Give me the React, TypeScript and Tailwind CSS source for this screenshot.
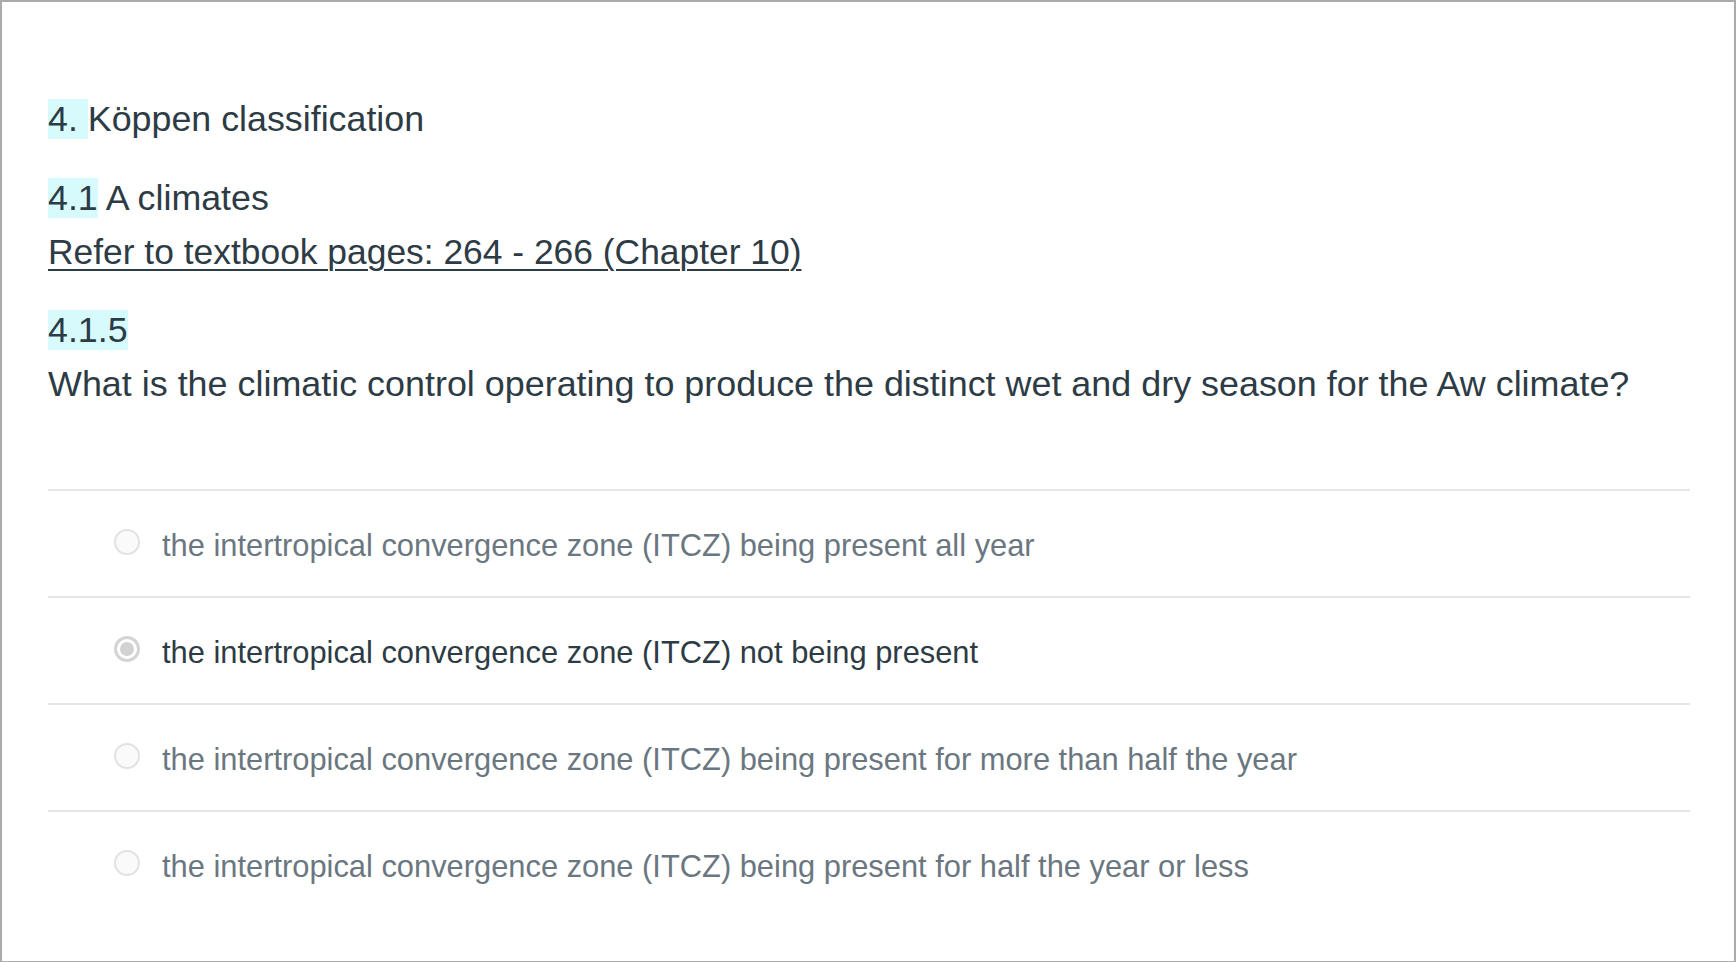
import React from "react";

const options = [
  { text: "the intertropical convergence zone (ITCZ) being present all year", selected: false },
  { text: "the intertropical convergence zone (ITCZ) not being present", selected: true },
  { text: "the intertropical convergence zone (ITCZ) being present for more than half the year", selected: false },
  { text: "the intertropical convergence zone (ITCZ) being present for half the year or less", selected: false },
];

export default function App() {
  return (
    <div className="box-border w-[1736px] h-[962px] overflow-hidden bg-white border-t-2 border-x-2 border-b border-[#ababab] font-['Liberation_Sans',Arial,sans-serif] text-[#2d3b45]">
      <div className="pl-[46px] pr-[44px] pt-[97px]">
        <div className="text-[35.8px] leading-[40px]">
          <span className="bg-[#d7fbfd]">4. </span>Köppen classification
        </div>
        <div className="mt-[39px] text-[35.8px] leading-[40px]">
          <span className="bg-[#d7fbfd]">4.1</span> A climates
        </div>
        <div className="mt-[14px] text-[35.4px] leading-[40px]">
          <a className="underline decoration-2 underline-offset-[5px] text-[#2d3b45]">
            Refer to textbook pages: 264 - 266 (Chapter 10)
          </a>
        </div>
        <div className="mt-[38px] text-[35.8px] leading-[40px]">
          <span className="bg-[#d7fbfd]">4.1.5</span>
        </div>
        <div className="mt-[14px] text-[35.9px] leading-[40px]">
          What is the climatic control operating to produce the distinct wet and dry season for the Aw climate?
        </div>
        <div className="mt-[85px]">
          {options.map((o, i) => (
            <div
              key={i}
              className="box-border h-[107px] border-t-2 border-[#e6e6e6] flex items-center pl-[66px]"
            >
              {o.selected ? (
                <span className="-mt-[3px] box-border w-[26px] h-[26px] rounded-full border-[3px] border-[#d4d4d4] bg-white flex items-center justify-center shrink-0">
                  <span className="w-[14px] h-[14px] rounded-full bg-[#d2d2d2]" />
                </span>
              ) : (
                <span className="-mt-[3px] box-border w-[26px] h-[26px] rounded-full border-2 border-[#e2e2e2] bg-[#fafafa] shrink-0" />
              )}
              <span
                className={
                  "ml-[22px] mt-[4px] text-[30.85px] leading-[36px] " +
                  (o.selected ? "text-[#2d3b45]" : "text-[#6b7780]")
                }
              >
                {o.text}
              </span>
            </div>
          ))}
        </div>
      </div>
    </div>
  );
}
